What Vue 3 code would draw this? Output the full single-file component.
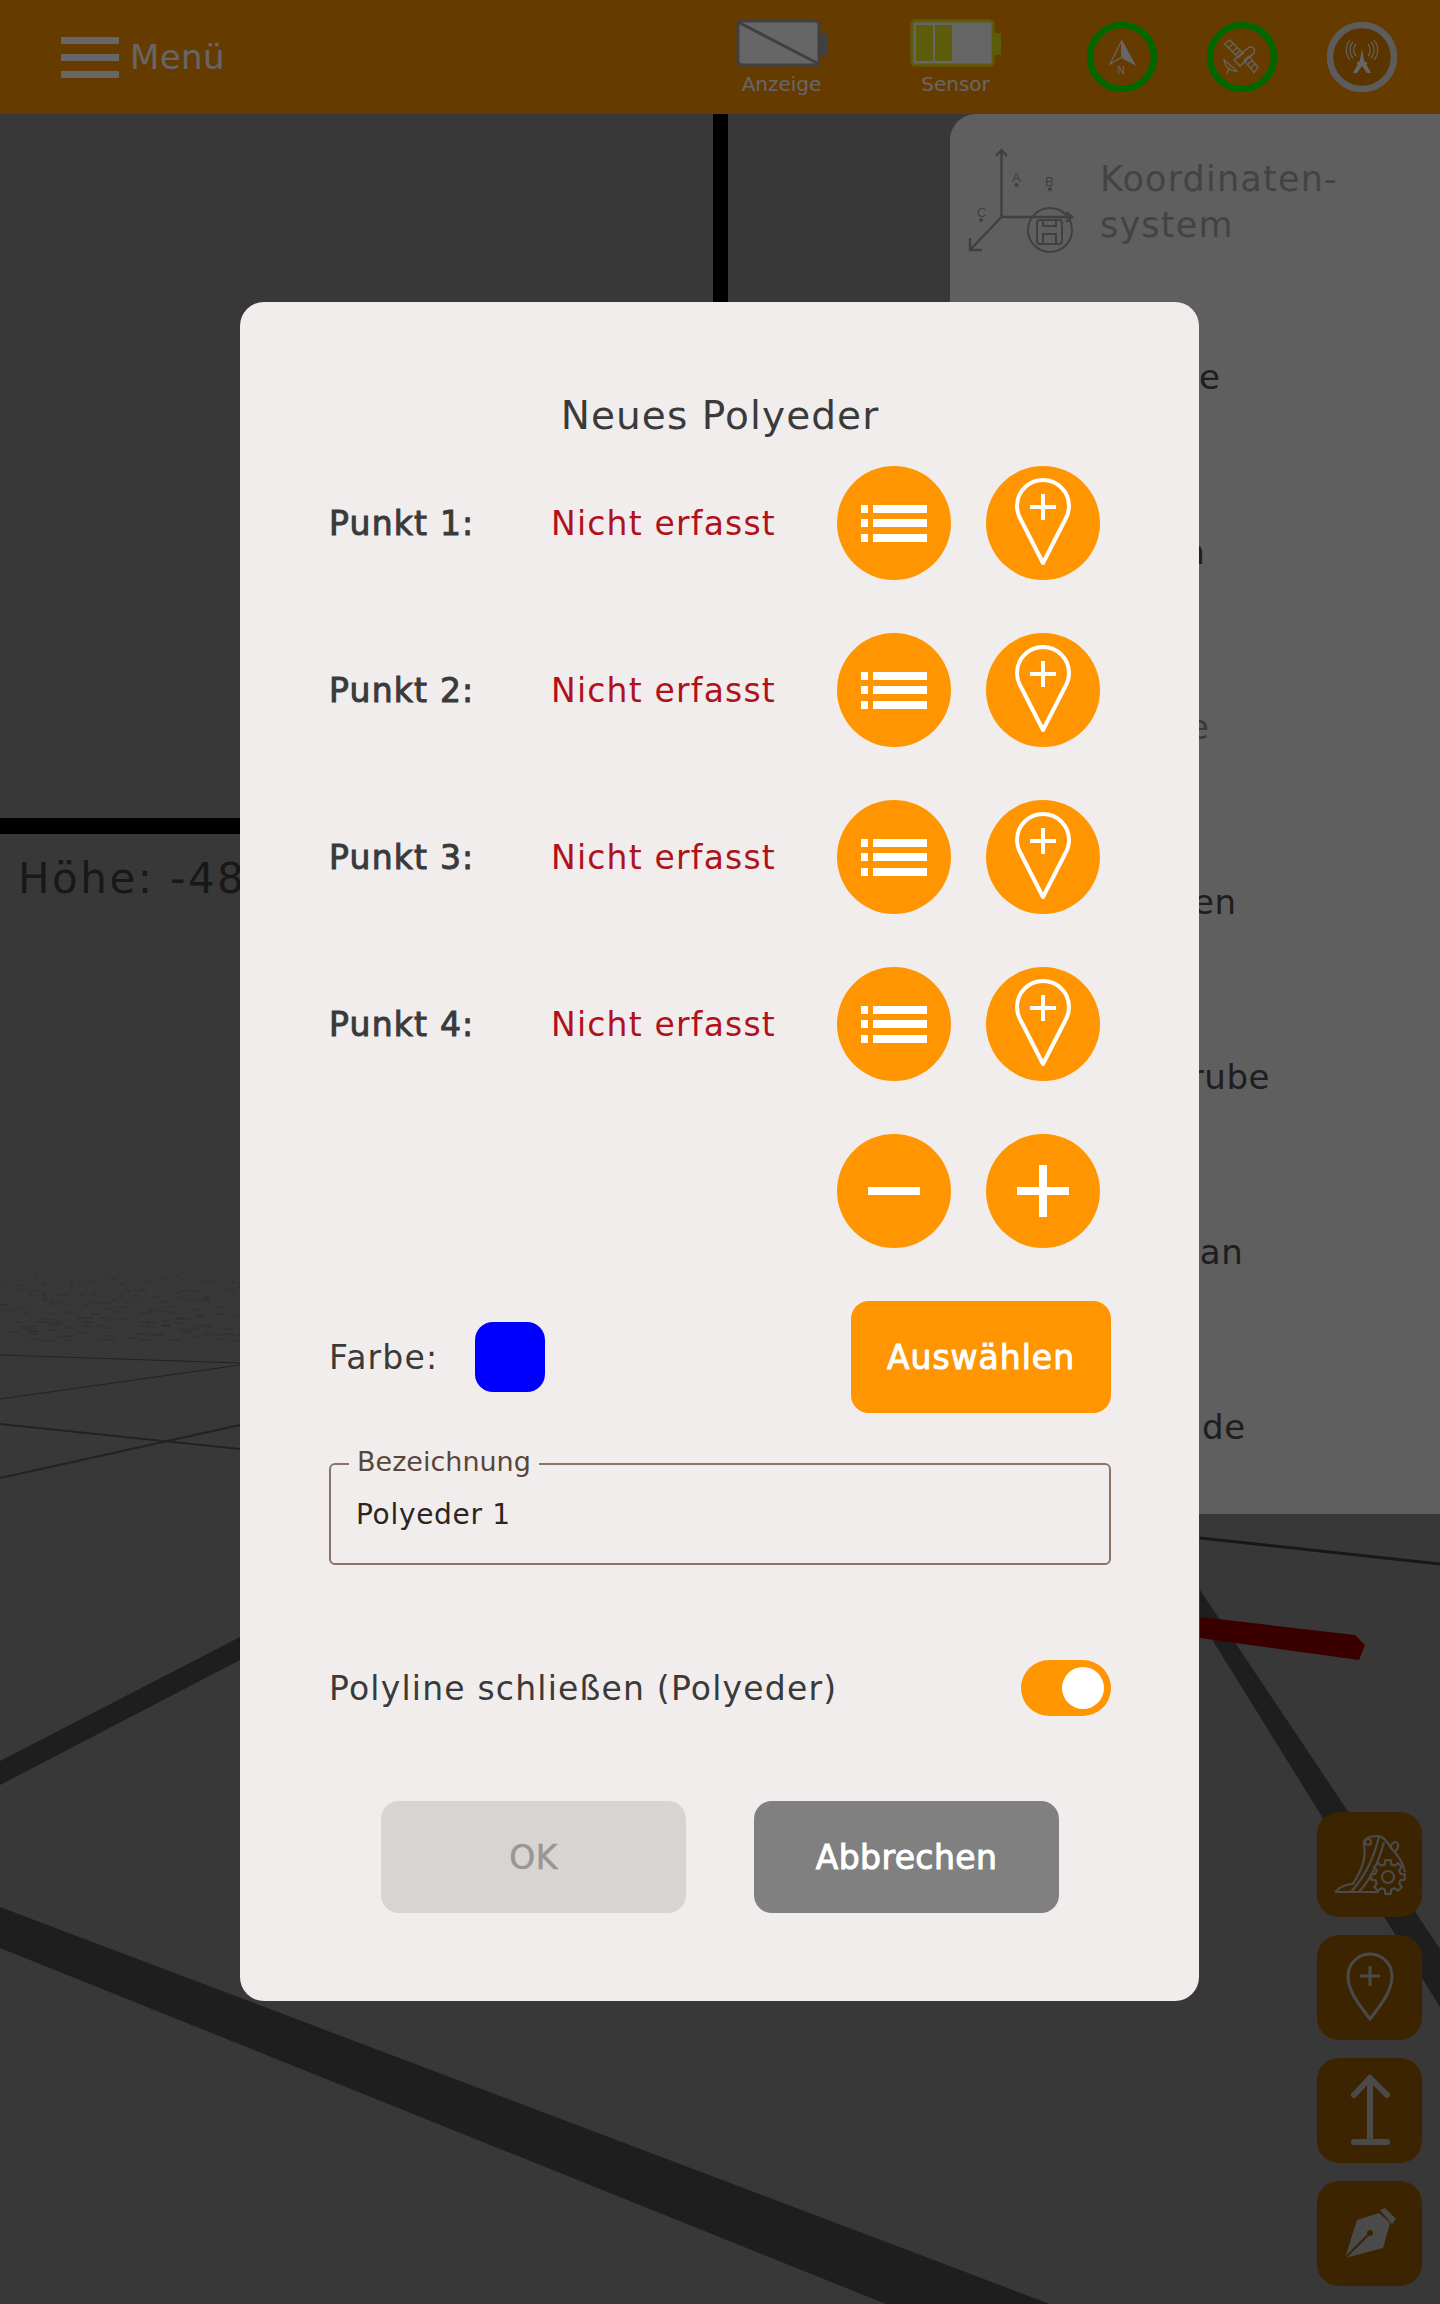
<template>
  <div class="page">
    <svg class="scene" width="1440" height="2304" viewBox="0 0 1440 2304">
      <rect x="713" y="114" width="15" height="720" fill="#000" />
      <rect x="0" y="818" width="720" height="16" fill="#000" />
      <line
        v-for="(d, i) in noise"
        :key="i"
        :x1="d.x"
        :y1="d.y"
        :x2="d.x + d.w"
        :y2="d.y"
        stroke="#747474"
        stroke-width="1"
      />
      <g stroke="#555" fill="none">
        <path d="M0 1355L240 1363" stroke-width="1" />
        <path d="M0 1399L240 1365" stroke-width="1" />
        <path d="M0 1424L240 1449" stroke-width="2" />
        <path d="M0 1478L240 1425" stroke-width="2" />
        <path d="M1200 1538L1440 1564" stroke-width="3" stroke="#3c3c3c" />
      </g>
      <g fill="#4b4b4b">
        <path d="M0 1761L240 1637V1660L0 1785Z" />
        <path d="M0 1907L1050 2304H886L0 1948Z" />
        <path d="M1200 1590L1440 1949V2007L1200 1620Z" />
      </g>
      <path d="M1200 1617L1355 1635L1365 1645L1359 1660L1200 1638Z" fill="#910000" />
    </svg>
    <div class="height-label">Höhe: -48</div>

    <header class="top-bar">
      <div class="burger"><i></i><i></i><i></i></div>
      <span class="menu-text">Menü</span>
      <div class="battery first">
        <svg width="91" height="48" viewBox="0 0 91 48">
          <rect x="2" y="2" width="81" height="44" rx="4" fill="#fff" stroke="#a0a0a0" stroke-width="3" />
          <rect x="84" y="14" width="7" height="22" fill="#a0a0a0" />
          <path d="M2 3L83 45" stroke="#a0a0a0" stroke-width="3" />
        </svg>
        <span>Anzeige</span>
      </div>
      <div class="battery second">
        <svg width="91" height="48" viewBox="0 0 91 48">
          <rect x="2" y="2" width="81" height="44" rx="3" fill="#fff" stroke="#e6e619" stroke-width="3" />
          <rect x="84" y="14" width="7" height="22" fill="#e6e619" />
          <rect x="6" y="6" width="17" height="36" rx="1" fill="#e6e619" />
          <rect x="25" y="6" width="17" height="36" rx="1" fill="#e6e619" />
        </svg>
        <span>Sensor</span>
      </div>
      <div class="status-icons">
        <svg width="70" height="70" viewBox="0 0 70 70" fill="none" stroke="#fff" stroke-width="1.2">
          <circle cx="35" cy="35" r="32" stroke="#00ff00" stroke-width="6.5" />
          <path d="M34.7 18.7L23 42L34.7 35.3L47.3 42Z" />
          <path d="M34.7 18.7L47.3 42L34.7 35.3Z" fill="#fff" />
          <text x="30.5" y="52" font-size="10" fill="#fff" stroke="none" font-family="Liberation Sans, sans-serif">N</text>
        </svg>
        <svg width="70" height="70" viewBox="0 0 70 70" fill="none" stroke="#fff" stroke-width="1.2">
          <circle cx="35" cy="35" r="32" stroke="#00ff00" stroke-width="6.5" />
          <path d="M17.7 22L22.7 18L36.3 31.3L31.3 35.7Z M21 26L26 22 M25 30L30 26 M28 33L33 29" />
          <path d="M37 38L42 34L51 45.3L47 50.7Z M41 42L46 38 M44 46L48 42" />
          <path d="M27 38L41 26C44 23 49 26 47 31L33 44Z" stroke-width="1.4" />
          <path d="M17 38C18 45 24 50 30 49Z M22 46L20 52" />
        </svg>
        <svg width="70" height="70" viewBox="0 0 70 70" fill="none" stroke="#fff" stroke-width="1.1">
          <circle cx="35" cy="35" r="32" fill="#e08500" stroke="#e6e6e6" stroke-width="6.5" />
          <path d="M29 22C26 25 26 31 29 34M41 22C44 25 44 31 41 34" />
          <path d="M26 20C22 24 22 32 26 36M44 20C48 24 48 32 44 36" />
          <path d="M23 18C18 24 18 32 23 38M47 18C52 24 52 32 47 38" />
          <path d="M35 27L33 38L26 51H30L35 44L40 51H44L37 38Z" fill="#fff" stroke="none" />
          <path d="M30 41H40" stroke-width="2" />
        </svg>
      </div>
    </header>

    <aside class="side-panel">
      <div class="panel-head">
        <svg class="axis-icon" width="120" height="120" viewBox="0 0 120 120" fill="none" stroke="#a0a0a0" stroke-width="2.5">
          <path d="M41.5 10V77H112M41.5 77L10 110" />
          <path d="M36 16L41.5 10L47 16M106 72L112 77L106 82M10 98L10 110L22 110" />
          <circle cx="90" cy="90" r="22" stroke-width="2" />
          <rect x="77" y="80" width="25" height="24" rx="3" stroke-width="2" />
          <path d="M83 80V86H96V80M83 104V94H96V104" stroke-width="2" />
          <g fill="#a0a0a0" stroke="none" font-family="Liberation Sans, sans-serif" font-size="13">
            <text x="52" y="42">A</text>
            <text x="85" y="46">B</text>
            <text x="17" y="77">C</text>
            <circle cx="56.5" cy="45" r="2" />
            <circle cx="90" cy="49" r="2" />
            <circle cx="21" cy="80" r="2" />
          </g>
        </svg>
        <div class="panel-title">Koordinaten-<br />system</div>
      </div>
      <div
        v-for="(item, i) in panelItems"
        :key="item"
        class="panel-item"
        :class="{ faded: i == 2 }"
      >
        {{ item }}
      </div>
    </aside>

    <div class="tool-buttons">
      <button class="tool">
        <svg width="105" height="105" viewBox="0 0 105 105" fill="none" stroke="#b9b9b9" stroke-width="2.2" stroke-linejoin="round">
          <path d="M18 80C23 75 30 72 36 72C43 60 50 48 47 33C46 26 52 24 61 24C67 24 71 31 74 36C80 42 86 50 88 60" />
          <path d="M18 80H62" />
          <path d="M62 24C58 42 50 62 34 80" />
          <path d="M67 30C62 48 56 64 42 80" />
          <circle cx="51" cy="30" r="3" />
          <path d="M74 36C73 31 80 28 81 32C82 36 80 38 77 40" />
          <path :d="gearPath" fill="#965a00" />
          <circle cx="71" cy="65" r="6" />
        </svg>
      </button>
      <button class="tool">
        <svg width="105" height="105" viewBox="0 0 105 105" fill="none" stroke="#b9b9b9" stroke-width="3">
          <path d="M53 84C45 73 31 58 31 41A22 22 0 0 1 75 41C75 58 61 73 53 84Z" />
          <path d="M53 31V51M43 41H63" />
        </svg>
      </button>
      <button class="tool">
        <svg width="105" height="105" viewBox="0 0 105 105" fill="none" stroke="#b9b9b9" stroke-width="6" stroke-linecap="round">
          <path d="M53 20V83M37 37L53 20L70 37M37 84H70" />
        </svg>
      </button>
      <button class="tool">
        <svg width="105" height="105" viewBox="0 0 105 105" fill="#b9b9b9">
          <path d="M28 77L40 39L62 32L73 42L66 67Z" />
          <path d="M63 29L68 27L79 38L75 43Z" />
          <path d="M28 77L53 52" stroke="#965a00" stroke-width="2" />
          <circle cx="53" cy="52" r="3" fill="#965a00" />
        </svg>
      </button>
    </div>

    <div class="overlay">
      <div class="dialog">
        <h1 class="dialog-title">Neues Polyeder</h1>
        <div class="rows">
          <div v-for="n in 4" :key="n" class="row">
            <span class="row-label">Punkt {{ n }}:</span>
            <span class="row-state">Nicht erfasst</span>
            <button class="round">
              <svg width="114" height="114" viewBox="0 0 114 114" fill="#fff">
                <rect x="24" y="39" width="7" height="8" />
                <rect x="36" y="39" width="54" height="8" />
                <rect x="24" y="53" width="7" height="8" />
                <rect x="36" y="53" width="54" height="8" />
                <rect x="24" y="68" width="7" height="8" />
                <rect x="36" y="68" width="54" height="8" />
              </svg>
            </button>
            <button class="round">
              <svg width="114" height="114" viewBox="0 0 114 114" fill="none" stroke="#fff" stroke-width="4">
                <path d="M57 97L35 54C32 49 31 45 31 40A26 26 0 0 1 83 40C83 45 82 49 79 54Z" stroke-linejoin="round" />
                <path d="M57 28V54M44 41H70" />
              </svg>
            </button>
          </div>
          <div class="row end">
            <button class="round">
              <svg width="114" height="114" viewBox="0 0 114 114" fill="#fff">
                <rect x="31" y="53" width="52" height="8" />
              </svg>
            </button>
            <button class="round">
              <svg width="114" height="114" viewBox="0 0 114 114" fill="#fff">
                <rect x="31" y="53" width="52" height="8" />
                <rect x="53" y="31" width="8" height="52" />
              </svg>
            </button>
          </div>
        </div>

        <div class="color-row">
          <span class="color-label">Farbe:</span>
          <span class="swatch"></span>
          <button class="pick">Auswählen</button>
        </div>

        <div class="field">
          <span class="field-legend">Bezeichnung</span>
          <input v-model="name" class="field-input" />
        </div>

        <div class="toggle-row">
          <span>Polyline schließen (Polyeder)</span>
          <span class="toggle"><i></i></span>
        </div>

        <div class="actions">
          <button class="action ok">OK</button>
          <button class="action cancel">Abbrechen</button>
        </div>
      </div>
    </div>
  </div>
</template>

<script setup>
import { ref } from "vue";

const name = ref("Polyeder 1");

const panelItems = ["Punkte", "Linien", "Ebene", "Flächen", "Baugrube", "Bauplan", "Gelände"];

// ground texture far away on the horizon
const noise = [];
let seed = 7;
for (let i = 0; i < 200; i++) {
  seed = (seed * 137 + 41) % 1009;
  const x = (seed * 7) % 245;
  const y = 1276 + (seed * 13 + i * 5) % 66;
  noise.push({ x: x, y: y, w: 2 + (y - 1276) / 8 + (seed % 3) });
}

// outline of the little gear on the terrain button
function makeGear(cx, cy, outer, inner, teeth) {
  let d = "";
  const step = (Math.PI * 2) / teeth;
  for (let t = 0; t < teeth; t++) {
    const a = t * step;
    const pts = [
      [inner, a - step * 0.32],
      [outer, a - step * 0.2],
      [outer, a + step * 0.2],
      [inner, a + step * 0.32],
    ];
    for (const p of pts) {
      const x = cx + p[0] * Math.cos(p[1]);
      const y = cy + p[0] * Math.sin(p[1]);
      d += (d == "" ? "M" : "L") + x.toFixed(1) + " " + y.toFixed(1);
    }
  }
  return d + "Z";
}
const gearPath = makeGear(71, 65, 17, 13, 8);
</script>

<style scoped>
.page {
  position: relative;
  width: 1440px;
  height: 2304px;
  overflow: hidden;
  background: #8c8c8c;
  font-family: "DejaVu Sans", sans-serif;
}

.scene {
  position: absolute;
  left: 0;
  top: 0;
}

.height-label {
  position: absolute;
  left: 18px;
  top: 851px;
  font-size: 42px;
  line-height: 56px;
  letter-spacing: 2.5px;
  color: #3c3c3c;
}

.top-bar {
  position: relative;
  display: flex;
  align-items: center;
  height: 114px;
  padding-right: 43px;
  background: #ff9500;
}

.burger {
  display: flex;
  flex-direction: column;
  gap: 10px;
  width: 58px;
  margin-left: 61px;
}

.burger i {
  display: block;
  height: 7px;
  background: #fff;
}

.menu-text {
  margin-left: 11px;
  font-size: 34px;
  letter-spacing: 0.4px;
  color: #fff;
}

.battery {
  display: flex;
  flex-direction: column;
  align-items: center;
  gap: 5px;
  width: 91px;
  font-size: 20px;
  line-height: 24px;
  color: #fff;
}

.battery.first {
  margin-left: auto;
}

.battery.second {
  margin-left: 83px;
}

.status-icons {
  display: flex;
  gap: 50px;
  margin-left: 86px;
}

.status-icons svg {
  display: block;
}

.side-panel {
  position: absolute;
  left: 950px;
  top: 114px;
  width: 490px;
  background: #eee;
  border-top-left-radius: 26px;
}

.panel-head {
  display: flex;
  align-items: center;
  height: 175px;
}

.axis-icon {
  flex: none;
  margin: -3px 0 0 10px;
}

.panel-title {
  margin-left: 20px;
  font-size: 35px;
  line-height: 46px;
  letter-spacing: 1.2px;
  color: #a8a8a8;
}

.panel-item {
  display: flex;
  align-items: center;
  height: 175px;
  padding-left: 150px;
  font-size: 34px;
  letter-spacing: 0.6px;
  color: #4b4b4b;
}

.panel-item.faded {
  color: #909090;
}

.tool-buttons {
  position: absolute;
  left: 1317px;
  top: 1812px;
  display: flex;
  flex-direction: column;
  gap: 18px;
}

.tool {
  width: 105px;
  height: 105px;
  padding: 0;
  border: 0;
  border-radius: 22px;
  background: #965a00;
}

.tool svg {
  display: block;
}

.overlay {
  position: absolute;
  inset: 0;
  display: flex;
  align-items: center;
  justify-content: center;
  padding: 0 1px 1px 0;
  background: rgba(0, 0, 0, 0.6);
}

.dialog {
  box-sizing: border-box;
  flex: none;
  width: 959px;
  height: 1699px;
  padding: 84px 88px 0 89px;
  background: #f1eded;
  border-radius: 24px;
  color: #3a3a3a;
  font-size: 33px;
  letter-spacing: 1.2px;
}

.dialog-title {
  margin: 0 0 20px;
  font-size: 39px;
  line-height: 60px;
  font-weight: 400;
  letter-spacing: 1.1px;
  text-align: center;
}

.rows {
  display: flex;
  flex-direction: column;
  gap: 53px;
  padding-right: 11px;
}

.row {
  display: flex;
  align-items: center;
  gap: 35px;
  height: 114px;
}

.row.end {
  justify-content: flex-end;
}

.row-label {
  width: 187px;
  -webkit-text-stroke: 1px currentColor;
}

.row-state {
  flex: 1;
  color: #b0121c;
}

.round {
  flex: none;
  width: 114px;
  height: 114px;
  padding: 0;
  border: 0;
  border-radius: 50%;
  background: #ff9500;
}

.round svg {
  display: block;
}

.color-row {
  display: flex;
  align-items: center;
  height: 112px;
  margin-top: 53px;
}

.color-label {
  width: 146px;
}

.swatch {
  width: 70px;
  height: 70px;
  border-radius: 18px;
  background: #0000ff;
}

.pick {
  width: 260px;
  height: 112px;
  margin-left: auto;
  padding: 0;
  border: 0;
  border-radius: 18px;
  background: #ff9500;
  color: #fff;
  font: 400 33px "DejaVu Sans", sans-serif;
  letter-spacing: 1px;
  -webkit-text-stroke: 1px #fff;
}

.field {
  position: relative;
  box-sizing: border-box;
  height: 102px;
  margin-top: 50px;
  border: 2px solid #8a7568;
  border-radius: 6px;
}

.field-legend {
  position: absolute;
  left: 18px;
  top: -21px;
  padding: 0 8px;
  background: #f1eded;
  font-size: 27px;
  line-height: 36px;
  letter-spacing: 0;
  color: #5a4639;
}

.field-input {
  box-sizing: border-box;
  width: 100%;
  height: 100%;
  padding: 0 25px;
  border: 0;
  outline: 0;
  background: transparent;
  font: 28px "DejaVu Sans", sans-serif;
  letter-spacing: 0.7px;
  color: #2c2420;
}

.toggle-row {
  display: flex;
  align-items: center;
  justify-content: space-between;
  height: 56px;
  margin-top: 95px;
}

.toggle {
  display: flex;
  align-items: center;
  justify-content: flex-end;
  box-sizing: border-box;
  width: 90px;
  height: 56px;
  padding-right: 7px;
  border-radius: 28px;
  background: #ff9500;
}

.toggle i {
  display: block;
  width: 42px;
  height: 42px;
  border-radius: 50%;
  background: #fff;
}

.actions {
  display: flex;
  justify-content: center;
  gap: 68px;
  margin-top: 85px;
}

.action {
  width: 305px;
  height: 112px;
  padding: 0;
  border: 0;
  border-radius: 18px;
  font: 400 33px "DejaVu Sans", sans-serif;
  letter-spacing: 0.4px;
}

.action.ok {
  background: #d8d4d4;
  color: #9b9691;
  -webkit-text-stroke: 0.6px #9b9691;
}

.action.cancel {
  background: #808080;
  color: #fff;
  -webkit-text-stroke: 1px #fff;
}
</style>
